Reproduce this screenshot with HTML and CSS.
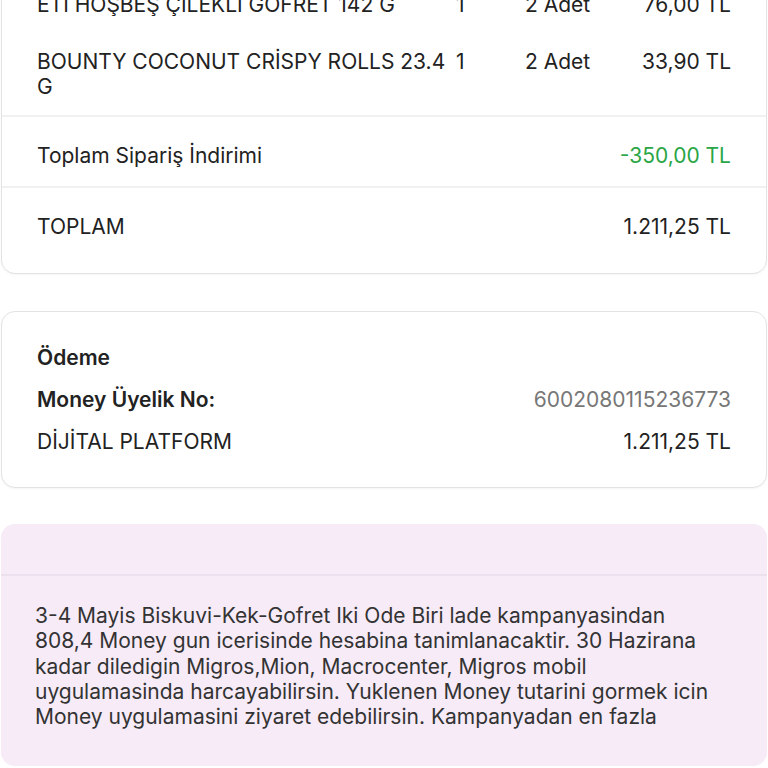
FILE: index.html
```html
<!DOCTYPE html>
<html lang="tr">
<head>
  <meta charset="UTF-8" />
  <meta name="viewport" content="width=device-width, initial-scale=1.0" />
  <title>Sipariş Detayı</title>
  <link rel="stylesheet" href="styles.css">
</head>
<body>
  <div class="page">
    <div class="card order-card">
      <div class="item">
        <span class="item-name">ETI HOŞBEŞ ÇİLEKLİ GOFRET 142 G</span>
        <span class="item-qty">1</span>
        <span class="item-unit">2 Adet</span>
        <span class="item-price">76,00 TL</span>
      </div>
      <div class="item">
        <span class="item-name">BOUNTY COCONUT CRİSPY ROLLS 23.4 G</span>
        <span class="item-qty">1</span>
        <span class="item-unit">2 Adet</span>
        <span class="item-price">33,90 TL</span>
      </div>
      <div class="summary-row">
        <span>Toplam Sipariş İndirimi</span>
        <span class="discount">-350,00 TL</span>
      </div>
      <div class="summary-row total">
        <span>TOPLAM</span>
        <span>1.211,25 TL</span>
      </div>
    </div>

    <div class="card payment-card">
      <div class="pay-title">Ödeme</div>
      <div class="pay-row">
        <span class="pay-label">Money Üyelik No:</span>
        <span class="muted">6002080115236773</span>
      </div>
      <div class="pay-row">
        <span>DİJİTAL PLATFORM</span>
        <span>1.211,25 TL</span>
      </div>
    </div>

    <div class="campaign">
      <div class="campaign-head"></div>
      <p class="campaign-text">3-4 Mayis Biskuvi-Kek-Gofret Iki Ode Biri lade kampanyasindan 808,4 Money gun icerisinde hesabina tanimlanacaktir. 30 Hazirana kadar diledigin Migros,Mion, Macrocenter, Migros mobil uygulamasinda harcayabilirsin. Yuklenen Money tutarini gormek icin Money uygulamasini ziyaret edebilirsin. Kampanyadan en fazla</p>
    </div>
  </div>
</body>
</html>
```

FILE: styles.css
```css
body {
  font-family: Inter, "Noto Sans", sans-serif;
  margin: 0;
  padding: 0;
  color: #222;
  background: #fff;
  font-size: 21px;
  line-height: 25px;
  overflow: hidden;
}
.page {
  padding: 0 1px;
  margin-top: -25px;
}
.card {
  border: 1.5px solid #e3e3e3;
  border-radius: 14px;
  background: #fff;
  box-shadow: 0 1px 2px rgba(0, 0, 0, 0.04);
}
.order-card {
  padding-bottom: 34px;
}
.item {
  display: grid;
  grid-template-columns: 419px 69px 1fr auto;
  padding: 16px 35px;
}
.item-price {
  text-align: right;
}
.summary-row {
  display: flex;
  justify-content: space-between;
  padding: 26px 35px 18px;
  border-top: 2px solid #f1f1f1;
}
.summary-row.total {
  padding-bottom: 0;
}
.discount {
  color: #2aa646;
}
.payment-card {
  margin-top: 37px;
  padding: 33px 35px 33px;
  display: flex;
  flex-direction: column;
  gap: 17px;
}
.pay-title, .pay-label {
  font-weight: 600;
}
.pay-row {
  display: flex;
  justify-content: space-between;
}
.muted {
  color: #777;
}
.campaign {
  margin-top: 36px;
  background: #f6ebf7;
  border-radius: 14px;
  padding-bottom: 37px;
}
.campaign-head {
  height: 50px;
  border-bottom: 2px solid #ecdfee;
}
.campaign-text {
  margin: 0;
  padding: 27px 50px 0 34px;
  color: #333;
  line-height: 25.3px;
}
```
